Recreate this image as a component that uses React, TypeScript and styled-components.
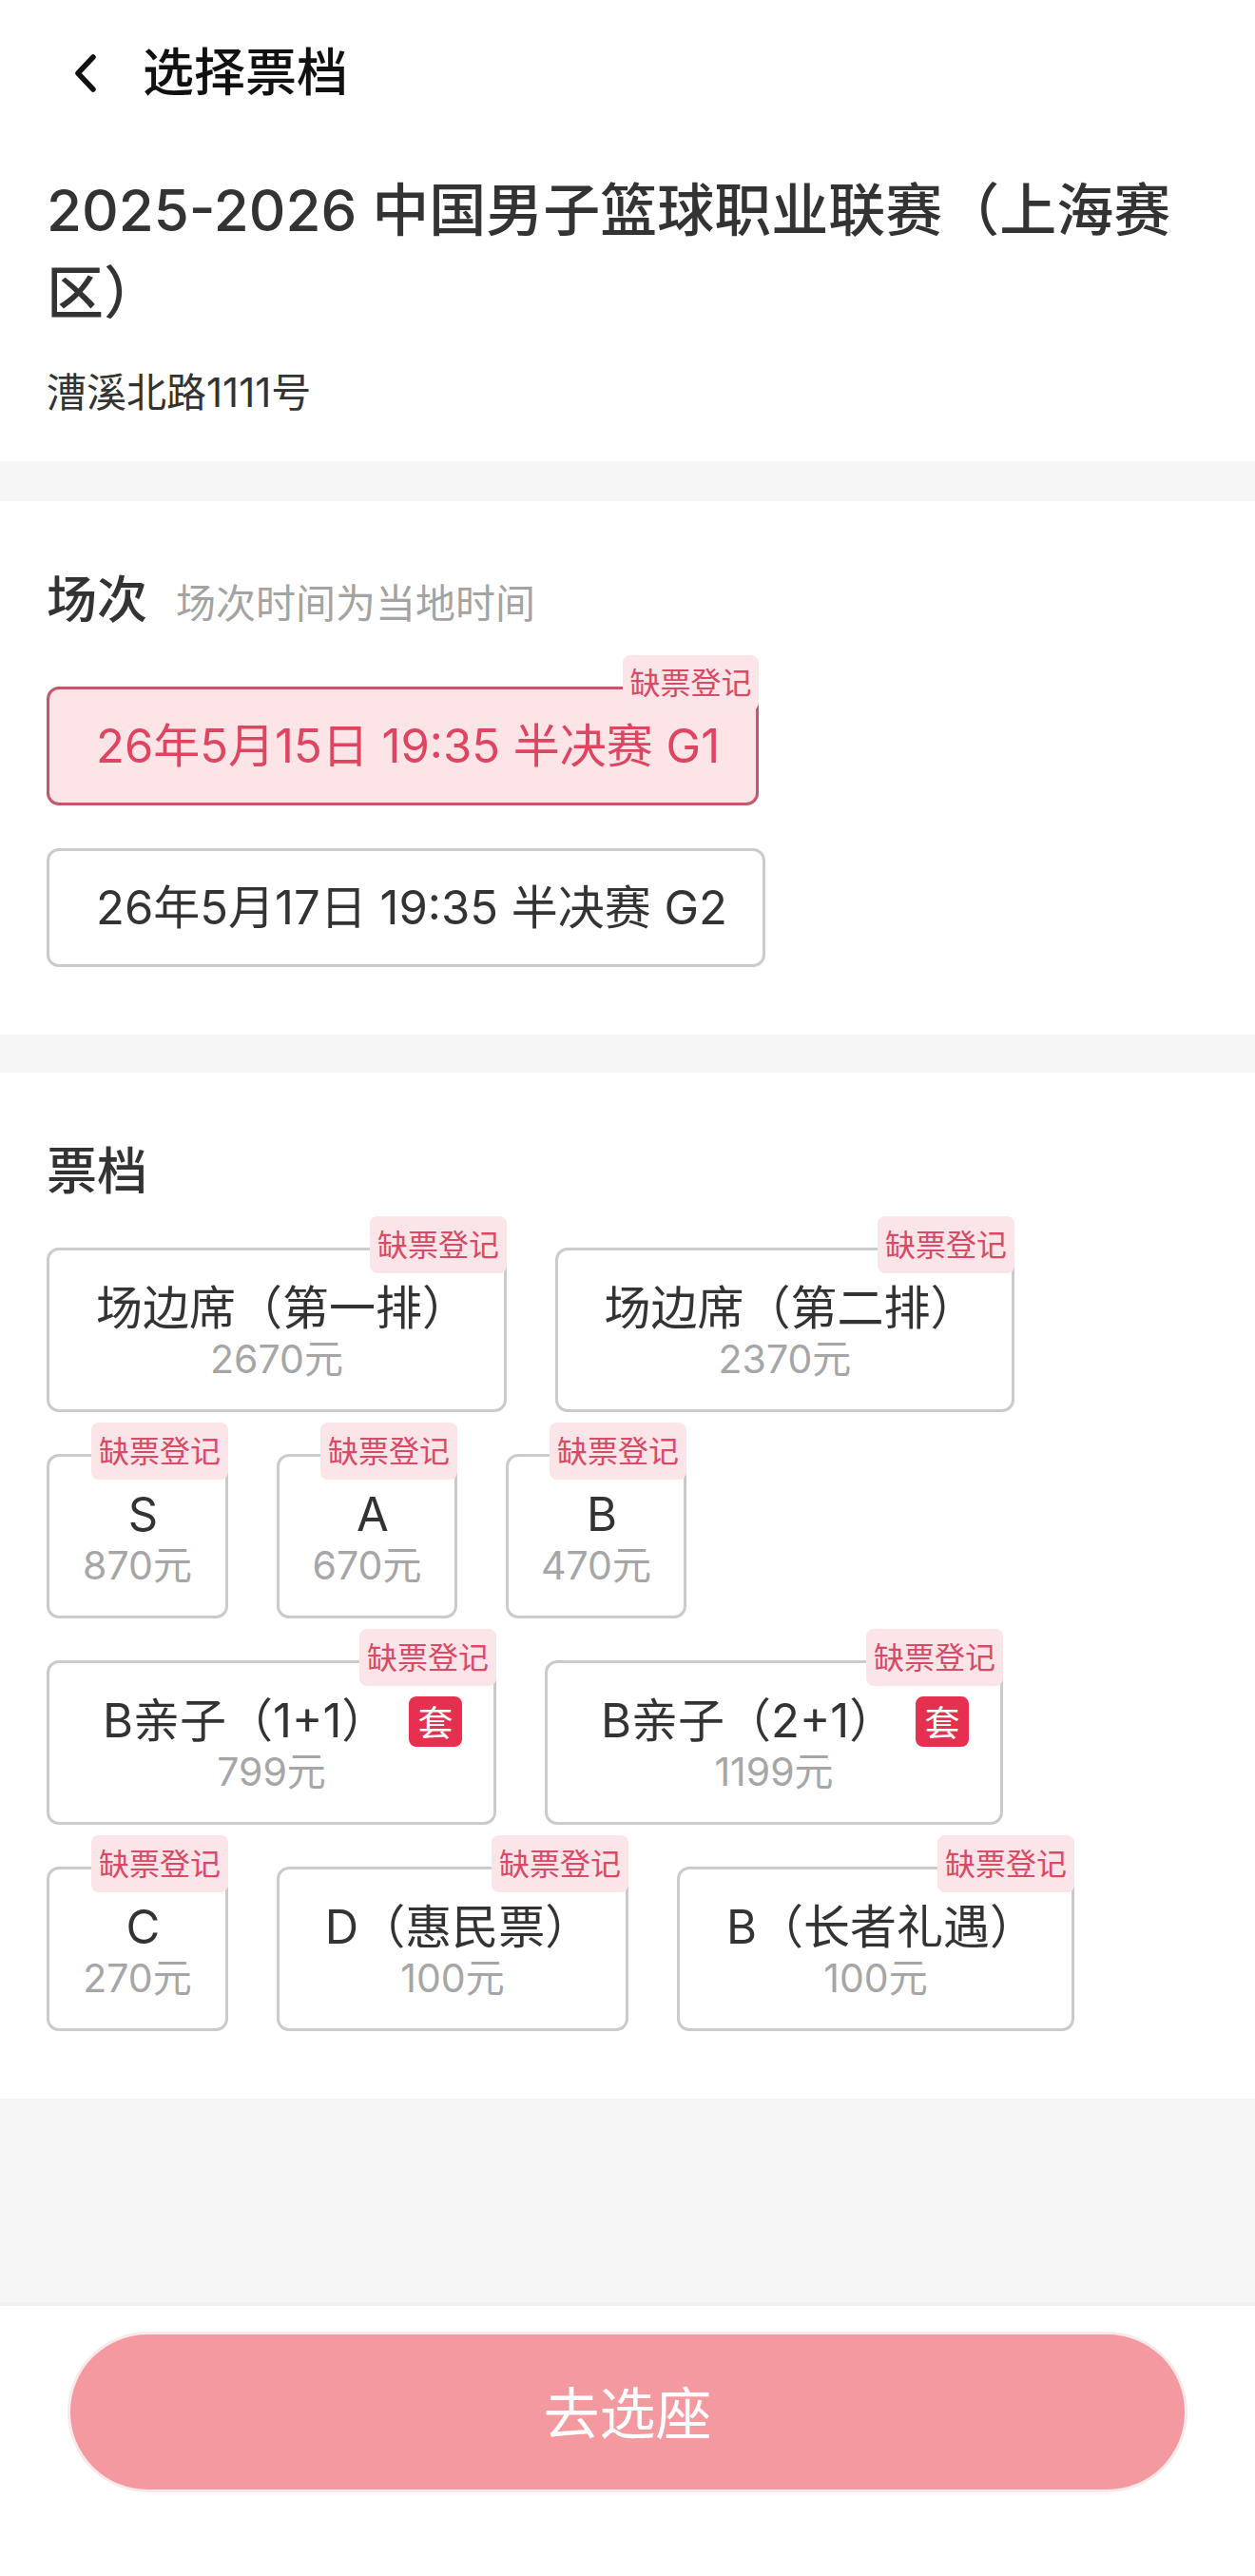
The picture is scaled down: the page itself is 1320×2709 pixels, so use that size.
import React from "react";
import styled, { createGlobalStyle } from "styled-components";

type Ticket = {
  name: string;
  price: string;
  width: number;
  pack?: boolean;
};

const tickets: Ticket[] = [
  { name: "场边席（第一排）", price: "2670元", width: 484 },
  { name: "场边席（第二排）", price: "2370元", width: 483 },
  { name: "S", price: "870元", width: 191 },
  { name: "A", price: "670元", width: 190 },
  { name: "B", price: "470元", width: 190 },
  { name: "B亲子（1+1）", price: "799元", width: 473, pack: true },
  { name: "B亲子（2+1）", price: "1199元", width: 482, pack: true },
  { name: "C", price: "270元", width: 191 },
  { name: "D（惠民票）", price: "100元", width: 370 },
  { name: "B（长者礼遇）", price: "100元", width: 418 },
];

const App: React.FC = () => {
  return (
    <Page lang="zh-CN">
      <GlobalStyle />
      <Intro>
        <TopBar>
          <BackIcon viewBox="0 0 28 40" fill="none">
            <path
              d="M22 3 L6 20 L22 37"
              stroke="#111"
              strokeWidth="5.5"
              strokeLinecap="round"
              strokeLinejoin="round"
            />
          </BackIcon>
          <PageTitle>选择票档</PageTitle>
        </TopBar>
        <EventTitle>2025-2026 中国男子篮球职业联赛（上海赛区）</EventTitle>
        <Address>漕溪北路1111号</Address>
      </Intro>

      <Section>
        <SectionHead>
          <SectionTitle>场次</SectionTitle>
          <SectionNote>场次时间为当地时间</SectionNote>
        </SectionHead>
        <SessionList>
          <SessionCard $width={749} $active>
            26年5月15日 19:35 半决赛 G1
            <SessionTag>缺票登记</SessionTag>
          </SessionCard>
          <SessionCard $width={756}>26年5月17日 19:35 半决赛 G2</SessionCard>
        </SessionList>
      </Section>

      <Section>
        <SectionHead>
          <SectionTitle>票档</SectionTitle>
        </SectionHead>
        <TicketGrid>
          {tickets.map((ticket) => (
            <TicketCard key={ticket.name + ticket.price} $width={ticket.width}>
              <Tag>缺票登记</Tag>
              <NameRow $pack={ticket.pack}>
                <TicketName>{ticket.name}</TicketName>
                {ticket.pack && <PackBadge>套</PackBadge>}
              </NameRow>
              <TicketPrice>{ticket.price}</TicketPrice>
            </TicketCard>
          ))}
        </TicketGrid>
      </Section>

      <Spacer />

      <Footer>
        <SubmitButton>去选座</SubmitButton>
      </Footer>
    </Page>
  );
};

const GlobalStyle = createGlobalStyle`
  html, body {
    margin: 0;
    padding: 0;
    background: #f6f6f6;
  }
  * {
    box-sizing: border-box;
  }
`;

const Page = styled.div`
  width: 1320px;
  min-height: 2709px;
  display: flex;
  flex-direction: column;
  background: #f6f6f6;
  color: #333;
  font-family: Inter, "Noto Sans CJK SC", sans-serif;
`;

const Intro = styled.header`
  background: #fff;
  padding: 0 49px 47px;
  margin-bottom: 42px;
`;

const TopBar = styled.div`
  height: 154px;
  display: flex;
  align-items: center;
  margin-bottom: 24px;
`;

const BackIcon = styled.svg`
  width: 28px;
  height: 40px;
  margin-left: 27px;
  margin-right: 46px;
`;

const PageTitle = styled.div`
  font-size: 54px;
  line-height: 60px;
  font-weight: 500;
  color: #111;
`;

const EventTitle = styled.h1`
  margin: 0;
  font-size: 60px;
  line-height: 87px;
  font-weight: 500;
  color: #333;
`;

const Address = styled.div`
  margin-top: 36px;
  font-size: 42px;
  line-height: 50px;
  color: #333;
`;

const Section = styled.section`
  background: #fff;
  padding: 69px 49px 71px;
  margin-bottom: 40px;

  &:last-of-type {
    margin-bottom: 0;
  }
`;

const SectionHead = styled.div`
  height: 70px;
  display: flex;
  align-items: center;
  gap: 30px;
`;

const SectionTitle = styled.h2`
  margin: 0;
  font-size: 53px;
  line-height: 70px;
  font-weight: 500;
  color: #333;
`;

const SectionNote = styled.span`
  font-size: 42px;
  color: #a3a3a3;
`;

const SessionList = styled.div`
  margin-top: 56px;
  display: flex;
  flex-direction: column;
  align-items: flex-start;
  gap: 45px;
`;

const SessionCard = styled.div<{ $width: number; $active?: boolean }>`
  position: relative;
  width: ${(p) => p.$width}px;
  height: 125px;
  display: flex;
  align-items: center;
  padding: 0 0 8px 49px;
  border: 3px solid ${(p) => (p.$active ? "#c9556a" : "#cbcbcb")};
  border-radius: 13px;
  background: ${(p) => (p.$active ? "#fce4e7" : "#fff")};
  color: ${(p) => (p.$active ? "#dd4560" : "#333")};
  font-size: 49px;
  white-space: nowrap;
`;

const Tag = styled.div`
  position: absolute;
  top: -36px;
  right: -3px;
  width: 144px;
  height: 60px;
  padding-bottom: 5px;
  display: flex;
  align-items: center;
  justify-content: center;
  border-radius: 8px;
  background: #fce5e8;
  color: #d84a65;
  font-size: 32px;
  font-weight: 400;
`;

const SessionTag = styled(Tag)`
  height: 58px;
  width: 143px;
`;

const TicketGrid = styled.div`
  margin-top: 45px;
  max-width: 1100px;
  display: flex;
  flex-wrap: wrap;
  column-gap: 51px;
  row-gap: 44px;
`;

const TicketCard = styled.div<{ $width: number }>`
  position: relative;
  width: ${(p) => p.$width}px;
  height: 173px;
  padding-top: 31px;
  display: flex;
  flex-direction: column;
  align-items: center;
  border: 3px solid #cbcbcb;
  border-radius: 13px;
  background: #fff;
`;

const NameRow = styled.div<{ $pack?: boolean }>`
  height: 60px;
  align-self: ${(p) => (p.$pack ? "stretch" : "center")};
  display: flex;
  align-items: center;
  justify-content: ${(p) => (p.$pack ? "space-between" : "center")};
  padding: ${(p) => (p.$pack ? "0 33px 0 56px" : "0 0 0 12px")};
`;

const TicketName = styled.div`
  font-size: 49px;
  line-height: 60px;
  color: #333;
  white-space: nowrap;
`;

const PackBadge = styled.div`
  width: 56px;
  height: 53px;
  display: flex;
  align-items: center;
  justify-content: center;
  border-radius: 8px;
  background: #e6304f;
  color: #fff;
  font-size: 37px;
`;

const TicketPrice = styled.div`
  font-size: 41px;
  line-height: 46px;
  color: #a6a6a6;
  white-space: nowrap;
`;

const Spacer = styled.div`
  flex: 1;
`;

const Footer = styled.footer`
  background: #fff;
  border-top: 4px solid #f0f0f0;
  padding: 27px 71px 88px 71px;
`;

const SubmitButton = styled.button`
  display: block;
  width: 1178px;
  height: 169px;
  padding: 0 0 4px;
  border: 3px solid #f9e9ea;
  border-radius: 85px;
  background: #f4999f;
  color: #fff;
  font-family: inherit;
  font-size: 59px;
`;

export default App;
